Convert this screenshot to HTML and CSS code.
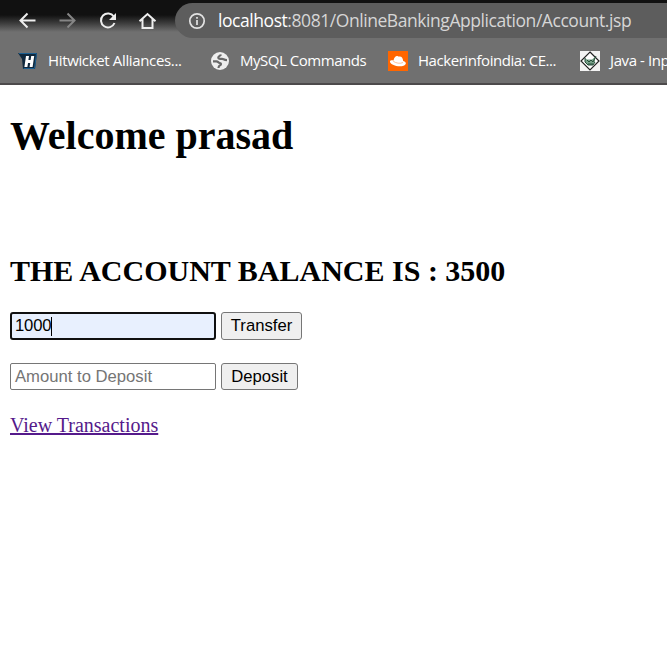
FILE: index.html
```html
<!DOCTYPE html>
<html lang="en">
<head>
<meta charset="utf-8">
<title>Account</title>
<link rel="stylesheet" href="styles.css">
</head>
<body>
<header class="browser">
  <div class="toolbar">
    <svg class="nav-icons" width="175" height="41" viewBox="0 0 175 41" fill="none" stroke-width="2">
      <path d="M35.5 20.500H21M27.500 13.500l-7 7 7 7" stroke="#eee"/>
      <path d="M59.500 20.500H74M67.500 13.500l7 7-7 7" stroke="#858585"/>
      <path d="M113.800 16.500A7 7 0 1 0 114.500 23" stroke="#eee"/>
      <path d="M116 13v7h-7z" fill="#eee"/>
      <path d="M139.500 21.200L147.500 14l8 7.200M142.500 19v9h10v-9" stroke="#eee"/>
    </svg>
    <div class="omnibox">
      <svg class="info" width="18" height="18" viewBox="0 0 18 18">
        <circle cx="9" cy="9" r="7.200" fill="none" stroke="#e2e2e2" stroke-width="1.700"/>
        <path d="M9 8v5M9 5v1.800" stroke="#e2e2e2" stroke-width="1.700"/>
      </svg>
      <span class="url"><span class="host">localhost</span>:8081/OnlineBankingApplication/Account.jsp</span>
    </div>
  </div>
  <nav class="bookmarks">
    <a class="mark hit"><svg width="20" height="20" viewBox="0 0 20 20">
      <path d="M0 2h19l-2 16H5L4 8z" fill="#10283d"/>
      <path d="M1 2.500h17.500L16.500 17.500H5.500" fill="none" stroke="#1b5f91"/>
      <path d="M8 5h3l-.6 4h2.200l.6-4h3l-1.600 11h-3l.6-4H10l-.6 4h-3z" fill="#fff"/>
    </svg><span>Hitwicket Alliances...</span></a>
    <a class="mark mysql"><svg width="20" height="20" viewBox="0 0 20 20">
      <circle cx="10" cy="10" r="9" fill="#eee"/>
      <path d="M11 3.500c-.5 1.500-2.700 1.300-2.700 3 0 1.800 2.300 1.300 3.800 1.300 1.400 0 1.800 1.400 4.900 1.400M3 10.300h3.500c1.500 0 1.800 1.500 3.200 1.700 1.600.2 1.700 1.700.4 2.200-1 .4-1.600 1-1.600 2.800" fill="none" stroke="#686868" stroke-width="2.200"/>
    </svg><span>MySQL Commands</span></a>
    <a class="mark hacker"><svg width="20" height="20" viewBox="0 0 20 20">
      <path d="M0 0h20v20H0z" fill="#ff6600"/>
      <path d="M5.500 9.500C6 6.500 7.500 5 9 5c1 0 1 .6 2 .5 3-.3 3.800 1.500 4.200 4.500 2 .6 3 1.600 2.600 2.700-1 2.800-6 3-9.500 2.200C4.500 14.200 1.500 12 2 10.300c.3-.9 1.800-1.200 3.500-.8z" fill="#fff"/>
      <path d="M5.200 10.200c2.600 2 7 2.800 9.800 1.300" fill="none" stroke="#ffb080" stroke-width=".8"/>
    </svg><span>Hackerinfoindia: CE...</span></a>
    <a class="mark java"><svg width="20" height="20" viewBox="0 0 20 20">
      <path d="M0 0h20v20H0z" fill="#f3f3f3"/>
      <path d="M10 1l9 9-9 9-9-9z" fill="#fff" stroke="#222" stroke-width="1.200"/>
      <path d="M5 7l2 1.500h5L15 6v5l-2 3H8l-3-3z" fill="#77a188"/>
      <path d="M5 7v4l3 3h5l2-3M7 9l2 2 2-2 2 2 3-6M8 13h5" fill="none" stroke="#274d3a"/>
    </svg><span>Java - Inp</span></a>
  </nav>
</header>
<main>
  <h1>Welcome prasad</h1>
  <h2>THE ACCOUNT BALANCE IS : 3500</h2>
  <form class="row"><div class="field active">1000<i class="caret"></i></div><button class="transfer" type="button">Transfer</button></form>
  <form class="row second"><div class="field hint">Amount to Deposit</div><button class="deposit" type="button">Deposit</button></form>
  <a class="link" href="#">View Transactions</a>
</main>
</body>
</html>
```
FILE: styles.css
```css
* { box-sizing: border-box; }
body { margin: 0; height: 647px; overflow: hidden; background: #fff; color: #000; font-family: "Liberation Serif", serif; }
.browser { height: 85px; overflow: hidden; border-bottom: 2px solid #4c4a4b; background: linear-gradient(#111 0, #111 15px, #3b3b3b 23px, #707070 32px); font-family: "Open Sans", sans-serif; }
.toolbar { display: flex; height: 38px; }
.nav-icons { flex: none; }
.omnibox { flex: 1; display: flex; align-items: center; height: 35px; margin-top: 3px; padding-left: 13px; border-radius: 18px 0 0 18px; background: #5d5d5d; white-space: nowrap; }
.info { flex: none; margin-right: 12px; }
.url { padding-bottom: 2px; color: #d6d6d6; font-size: 17.5px; letter-spacing: -.44px; }
.host { color: #fff; }
.bookmarks { display: flex; height: 45px; }
.mark { flex: none; display: flex; align-items: center; height: 45px; color: #fff; font-size: 15px; letter-spacing: -.4px; white-space: nowrap; }
.mark svg { flex: none; margin-right: 10px; }
.mark span { padding-bottom: 2px; }
.hit { margin-left: 18px; width: 192px; }
.hit span { letter-spacing: -.35px; }
.mysql { width: 178px; }
.mysql span { letter-spacing: -.47px; }
.hacker { width: 192px; }
.hacker span { letter-spacing: -.44px; }
main { padding: 28px 10px 0; }
h1 { margin: 0; font-size: 40px; line-height: 46px; }
h2 { margin: 95px 0 0; font-size: 30px; line-height: 34px; }
.row { display: flex; gap: 5px; margin: 24px 0 0; height: 28px; }
.second { margin-top: 23px; height: 27px; }
.field { display: flex; align-items: center; width: 206px; height: 100%; padding-left: 4px; border: 1px solid #767676; border-radius: 2px; font: 16.67px "Liberation Sans", sans-serif; }
.active { padding-left: 3px; border: 2px solid #101010; border-radius: 3px; background: #e8f0fe; letter-spacing: -.2px; }
.caret { width: 1px; height: 19px; background: #000; }
.hint { color: #757575; }
button { height: 100%; padding: 0; border: 1px solid #767676; border-radius: 3px; background: #efefef; color: #000; font: 16.67px "Liberation Sans", sans-serif; }
.transfer { width: 81px; }
.deposit { width: 77px; }
.link { display: inline-block; margin-top: 24px; font-size: 20px; line-height: 23px; color: #551a8b; text-decoration: underline; text-decoration-thickness: 2px; text-underline-offset: 1px; }
```
